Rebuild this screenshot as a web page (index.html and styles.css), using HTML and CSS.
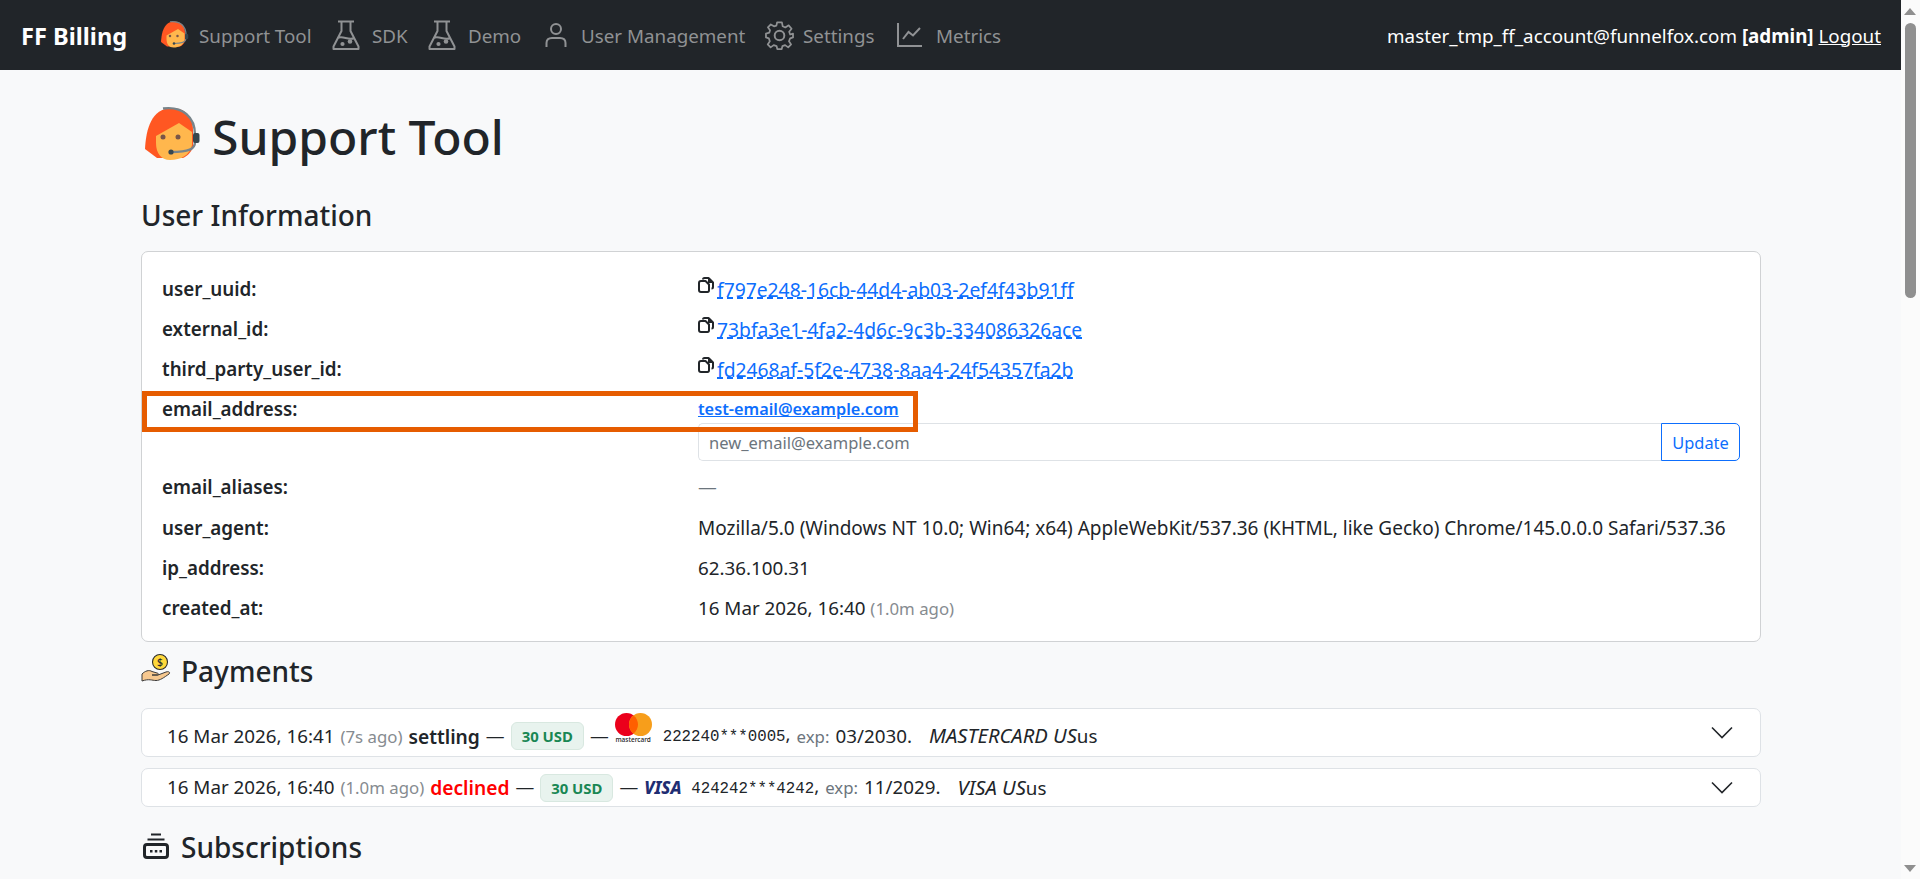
FILE: index.html
```html
<!DOCTYPE html>
<html lang="en">
<head>
<meta charset="utf-8">
<title>FF Billing</title>
<link rel="stylesheet" href="styles.css">
</head>
<body>
<svg class="defs" width="0" height="0" aria-hidden="true">
  <symbol id="agent" viewBox="0 0 60 60">
    <path fill="#ff5722" d="M2 44C3 25 8 3 29 3C42 3 50 12 50 25V42C48 48 44 51 40 53H14C10 50 6 47 2 44Z"/>
    <path fill="#ffb74d" d="M13 31L36 18L49 27V40C47 50 38 55 27 55C18 55 13 48 13 38Z"/>
    <circle cx="20" cy="32" r="2.5" fill="#795548"/><circle cx="35" cy="32" r="2.5" fill="#795548"/>
    <path fill="none" stroke="#78848a" stroke-width="2.4" d="M20 3.5C40 1 52 12 52 30"/>
    <path fill="none" stroke="#78848a" stroke-width="2.4" d="M52 37C52 44 46 47 28 47"/>
    <rect x="50" y="28" width="6.5" height="10" rx="2" fill="#37474f"/>
    <circle cx="28" cy="47" r="2.6" fill="#37474f"/>
  </symbol>
  <symbol id="flask" viewBox="0 0 28 30">
    <path fill="none" stroke="currentColor" stroke-width="2" stroke-linejoin="round" d="M6 1.500H22M9.500 1.500V11L1.500 26.500V29H26.500V26.500L18.500 11V1.500M5.500 18C11 15 16 21 22.500 18"/>
    <circle cx="10.500" cy="24" r="2.100" fill="currentColor"/><circle cx="18" cy="21.500" r="2.300" fill="currentColor"/>
  </symbol>
  <symbol id="copy" viewBox="0 0 16 16">
    <path fill="none" stroke="#212529" stroke-width="2" stroke-linejoin="round" d="M5 2.500C5 1.500 5.700 1 6.500 1H10.500L15 5.500V10C15 11 14.300 11.500 13.500 11.500"/>
    <path fill="#212529" d="M10 1h1.500l3.500 3.500V6h-5z"/>
    <path fill="none" stroke="#212529" stroke-width="2" stroke-linejoin="round" d="M3 4H7.500L11 7.500V13C11 14 10.300 15 9.500 15H3C2 15 1 14 1 13V6C1 4.700 2 4 3 4Z"/>
  </symbol>
  <symbol id="chev" viewBox="0 0 22 13">
    <path fill="none" stroke="#212529" stroke-width="1.600" d="M1 1.500L11 11.500L21 1.500"/>
  </symbol>
</svg>

<div class="viewport">
  <nav class="navbar">
    <a class="brand" href="#">FF Billing</a>
    <ul class="nav-list">
      <li class="nav-item nav-support"><svg class="ico-agent-sm"><use href="#agent"/></svg><span>Support Tool</span></li>
      <li class="nav-item nav-sdk"><svg class="ico-flask"><use href="#flask"/></svg><span>SDK</span></li>
      <li class="nav-item nav-demo"><svg class="ico-flask"><use href="#flask"/></svg><span>Demo</span></li>
      <li class="nav-item nav-user">
        <svg class="ico-user" viewBox="0 0 22 24"><circle cx="11" cy="6" r="5" fill="none" stroke="currentColor" stroke-width="2"/><path fill="none" stroke="currentColor" stroke-width="2" d="M1.500 24V20C1.500 16.500 4 15 7 15H15C18 15 20.500 16.500 20.500 20V24"/></svg>
        <span>User Management</span>
      </li>
      <li class="nav-item nav-settings">
        <svg class="ico-gear" viewBox="0 0 30 30"><circle cx="15" cy="15" r="5" fill="none" stroke="currentColor" stroke-width="2"/><path fill="none" stroke="currentColor" stroke-width="1.800" stroke-linejoin="round" d="M12.500 1.500H17.500L18.300 5.500L21 6.700L24.500 4.500L27.500 8L25 11.200L26 14L29 13L29 17L26 18L24.800 21L27 24.300L24 27.300L20.800 25L18 26L17.300 29H12.700L12 26L9 25L5.800 27.300L2.800 24.300L5 21L4 18L1 17V13L4.500 12L5.200 9.500L3 6.500L6 3.500L9.300 5.500L11.800 4.800Z"/></svg>
        <span>Settings</span>
      </li>
      <li class="nav-item nav-metrics">
        <svg class="ico-chart" viewBox="0 0 25 24"><path fill="none" stroke="currentColor" stroke-width="2" d="M1 0V23H25"/><path fill="none" stroke="currentColor" stroke-width="2" d="M6 16L11.500 9L16 12.500L23 5"/></svg>
        <span>Metrics</span>
      </li>
    </ul>
    <div class="nav-user-info">
      <span>master_tmp_ff_account@funnelfox.com</span> <strong>[admin]</strong> <a href="#">Logout</a>
    </div>
  </nav>

  <main class="container">
    <div class="page-title">
      <svg class="ico-agent-lg"><use href="#agent"/></svg>
      <h1>Support Tool</h1>
    </div>

    <h2 class="section-plain">User Information</h2>
    <section class="card">
      <div class="row"><div class="key">user_uuid:</div><div class="val"><svg class="ico-copy"><use href="#copy"/></svg><a class="dashed" href="#">f797e248-16cb-44d4-ab03-2ef4f43b91ff</a></div></div>
      <div class="row"><div class="key">external_id:</div><div class="val"><svg class="ico-copy"><use href="#copy"/></svg><a class="dashed" href="#">73bfa3e1-4fa2-4d6c-9c3b-334086326ace</a></div></div>
      <div class="row"><div class="key">third_party_user_id:</div><div class="val"><svg class="ico-copy"><use href="#copy"/></svg><a class="dashed" href="#">fd2468af-5f2e-4738-8aa4-24f54357fa2b</a></div></div>
      <div class="row row-email">
        <div class="highlight"></div>
        <div class="key">email_address:</div>
        <div class="val">
          <a class="email" href="#">test-email@example.com</a>
          <form class="input-group">
            <input type="text" placeholder="new_email@example.com">
            <button type="button">Update</button>
          </form>
        </div>
      </div>
      <div class="row"><div class="key">email_aliases:</div><div class="val muted-dash">—</div></div>
      <div class="row"><div class="key">user_agent:</div><div class="val ua">Mozilla/5.0 (Windows NT 10.0; Win64; x64) AppleWebKit/537.36 (KHTML, like Gecko) Chrome/145.0.0.0 Safari/537.36</div></div>
      <div class="row"><div class="key">ip_address:</div><div class="val">62.36.100.31</div></div>
      <div class="row"><div class="key">created_at:</div><div class="val">16 Mar 2026, 16:40 <small>(1.0m ago)</small></div></div>
    </section>

    <h2 class="section-icon section-payments">
      <svg class="ico-pay" viewBox="0 0 30 30">
        <circle cx="19" cy="9" r="7.500" fill="#ffd83b" stroke="#2b2b2b" stroke-width="1.100"/>
        <text class="dollar" x="19" y="12.800">$</text>
        <path fill="#f6c88f" stroke="#3a3a3a" stroke-width="1" stroke-linejoin="round" d="M1 21C4 18 8 16.500 11 18.500L16 20C18 20.500 18 22 16 22H11L17 22L25 19C28 18 29.500 19.500 28 21C23 24.500 19 27.500 15 27.500C11 27.500 8 25.500 1 28Z"/>
      </svg>
      Payments
    </h2>
    <div class="acc acc-tall">
      <div class="acc-body">
        <span class="date">16 Mar 2026, 16:41</span> <small>(7s ago)</small> <b>settling</b> <span class="dash">—</span> <span class="badge">30 USD</span> <span class="dash">—</span>
        <span class="brand-logo">
          <svg class="ico-mc" viewBox="0 0 37 23"><circle cx="11.500" cy="11.500" r="11.500" fill="#eb001b"/><circle cx="25.500" cy="11.500" r="11.500" fill="#f79e1b"/><path fill="#ff5f00" d="M18.500 2.400A11.500 11.500 0 0 1 18.500 20.600A11.500 11.500 0 0 1 18.500 2.400Z"/></svg>
          <span class="mc-word">mastercard</span>
        </span>
        <span class="card-no"><code>222240***0005</code>,</span> <small class="exp">exp:</small> <span>03/2030.</span> <span class="issuer-wrap"><i class="issuer">MASTERCARD US</i>us</span>
      </div>
      <svg class="ico-chev"><use href="#chev"/></svg>
    </div>
    <div class="acc acc-short">
      <div class="acc-body">
        <span class="date">16 Mar 2026, 16:40</span> <small>(1.0m ago)</small> <b class="declined">declined</b> <span class="dash">—</span> <span class="badge">30 USD</span> <span class="dash">—</span>
        <span class="visa">VISA</span>
        <span class="card-no"><code>424242***4242</code>,</span> <small class="exp">exp:</small> <span>11/2029.</span> <span class="issuer-wrap"><i class="issuer">VISA US</i>us</span>
      </div>
      <svg class="ico-chev"><use href="#chev"/></svg>
    </div>

    <h2 class="section-icon section-subs">
      <svg class="ico-subs" viewBox="0 0 26 28">
        <path fill="none" stroke="#212529" stroke-width="2" d="M8 1.500H18M4.500 6.500H21.500"/>
        <rect x="1.500" y="11.500" width="23" height="13" rx="2.500" fill="none" stroke="#212529" stroke-width="3"/>
        <path fill="#212529" d="M7 17h2.500v2.500H7zM11.800 17h2.500v2.500h-2.500zM16.500 17H19v2.500h-2.500z"/>
      </svg>
      Subscriptions
    </h2>
  </main>
</div>

<div class="scrollbar" aria-hidden="true">
  <span class="arrow-up"></span>
  <span class="thumb"></span>
  <span class="arrow-down"></span>
</div>
</body>
</html>
```
FILE: styles.css
```css
* { box-sizing: border-box; }
html, body { height: 100%; margin: 0; }
body {
  display: flex;
  overflow: hidden;
  background: #f8f9fa;
  color: #212529;
  font-family: "Noto Sans", "Liberation Sans", sans-serif;
  font-size: 18.8px;
  line-height: 27px;
}
.defs { position: absolute; }
a { color: #0d6efd; }

.viewport { flex: 1; min-width: 0; height: 100vh; overflow: hidden; }

.navbar {
  display: flex;
  align-items: center;
  height: 70px;
  padding: 2px 20px 0 21px;
  background: #212529;
  color: #fff;
}
.brand { color: #fff; font-size: 23.6px; font-weight: 700; text-decoration: none; width: 139px; white-space: nowrap; }
.nav-list { display: flex; align-items: center; list-style: none; margin: 0; padding: 0; color: #909294; }
.nav-item { display: flex; align-items: center; white-space: nowrap; }
.nav-item svg { margin-top: -2px; }
.nav-support { gap: 9px; width: 172px; }
.nav-sdk { gap: 12px; width: 96px; }
.nav-demo { gap: 12px; width: 117px; }
.nav-user { gap: 14px; width: 220px; }
.nav-settings { gap: 9px; width: 132px; }
.nav-metrics { gap: 14px; }
.ico-agent-sm { width: 30px; height: 30px; }
.ico-flask { width: 28px; height: 30px; }
.ico-user { width: 22px; height: 24px; }
.ico-gear { width: 29px; height: 29px; }
.ico-chart { width: 25px; height: 24px; }
.nav-user-info { margin-left: auto; white-space: nowrap; }
.nav-user-info a { color: #fff; }

.container { width: 1620px; margin-left: 141px; }
.page-title { display: flex; align-items: center; gap: 9px; height: 60px; margin-top: 35px; padding-left: 2px; }
.ico-agent-lg { width: 60px; height: 60px; }
h1 { margin: 3px 0 0; font-size: 48px; line-height: 54px; font-weight: 500; }
h2 { margin: 0; font-size: 28px; line-height: 32px; font-weight: 500; }
.section-plain { margin-top: 34px; margin-bottom: 20px; }

.card {
  position: relative;
  height: 391px;
  padding: 17px 20px 13px;
  background: #fff;
  border: 1px solid #d0d2d4;
  border-radius: 7px;
}
.row { position: relative; display: grid; grid-template-columns: 536px 1fr; height: 40.2px; padding: 6.6px 0; }
.row-email { height: 78.2px; }
.key { font-weight: 600; }
.val { min-width: 0; white-space: nowrap; }
.val.ua { font-size: 19px; }
.row-email .val { display: flex; flex-direction: column; }
.highlight { position: absolute; z-index: 2; left: -20px; top: 1px; width: 776px; height: 41px; border: 5px solid #e65c00; pointer-events: none; }
.ico-copy { width: 16px; height: 16px; margin-right: 3px; vertical-align: 4px; }
.dashed { font-size: 19.3px; text-decoration-style: dashed; }
.email { font-weight: 600; font-size: 16.3px; align-self: flex-start; }
.input-group { display: flex; height: 38px; }
.input-group input {
  flex: 1;
  min-width: 0;
  padding: 0 10px;
  border: 1px solid #dee2e6;
  border-right: 0;
  border-radius: 5px 0 0 5px;
  font: inherit;
  font-size: 16.5px;
  color: #212529;
  background: #fff;
}
.input-group input::placeholder { color: #6c757d; opacity: 1; }
.input-group button {
  width: 79px;
  padding: 0;
  border: 1px solid #0d6efd;
  border-radius: 0 5px 5px 0;
  font: inherit;
  font-size: 16.4px;
  color: #0d6efd;
  background: transparent;
}
.muted-dash { color: #6c757d; }
small { font-size: 16.8px; color: #868b90; }
.exp { color: #6c757d; }

.section-icon { display: flex; align-items: center; }
.section-payments { margin-top: 13px; margin-bottom: 21px; }
.section-subs { margin-top: 24px; }
.ico-pay { width: 30px; height: 30px; margin-right: 10px; margin-top: -6px; }
.dollar { font-size: 10.500px; font-weight: 500; text-anchor: middle; fill: #2b2b2b; }
.ico-subs { width: 26px; height: 28px; margin: -1px 12px 0 2px; }

.acc {
  display: flex;
  align-items: center;
  justify-content: space-between;
  padding: 0 27px 0 25px;
  background: #fff;
  border: 1px solid #dee2e6;
  border-radius: 7px;
}
.acc-tall { height: 49px; margin-bottom: 11px; }
.acc-tall .acc-body { padding-top: 7px; }
.acc-short { height: 39px; }
.acc-body { display: flex; align-items: center; gap: 6px; white-space: nowrap; }
.acc-body b { font-size: 19.200px; font-weight: 600; }
.declined { color: #f00; }
.dash { color: #212529; }
.badge {
  padding: 0 10px;
  height: 28px;
  line-height: 26px;
  font-size: 14.9px;
  font-weight: 700;
  color: #198754;
  background: #e8f3ee;
  border: 1px solid #d8e8e0;
  border-radius: 6px;
}
.brand-logo { display: flex; flex-direction: column; align-items: center; width: 37px; margin: 0 5px 15px 0; }
.ico-mc { width: 37px; height: 23px; }
.mc-word { font-size: 6.500px; line-height: 8px; color: #222; font-weight: 500; }
.visa { color: #1f2d72; font-style: italic; font-weight: 800; font-size: 17px; width: 38px; margin-right: 3px; }
code { font-family: "Liberation Mono", monospace; font-size: 15.75px; }
.issuer { font-size: 20.200px; }
.issuer-wrap { margin-left: 11px; }
.ico-chev { width: 22px; height: 13px; flex: none; }

.scrollbar { position: relative; flex: none; width: 19px; height: 100vh; background: #fbfbfb; }
.arrow-up, .arrow-down { position: absolute; left: 3px; width: 0; height: 0; border-left: 6.5px solid transparent; border-right: 6.5px solid transparent; }
.arrow-up { top: 8px; border-bottom: 7px solid #8f8f8f; }
.arrow-down { bottom: 7px; border-top: 7px solid #8f8f8f; }
.thumb { position: absolute; left: 4px; top: 23px; width: 11px; height: 275px; background: #8f8f8f; border-radius: 5.5px; }
```
